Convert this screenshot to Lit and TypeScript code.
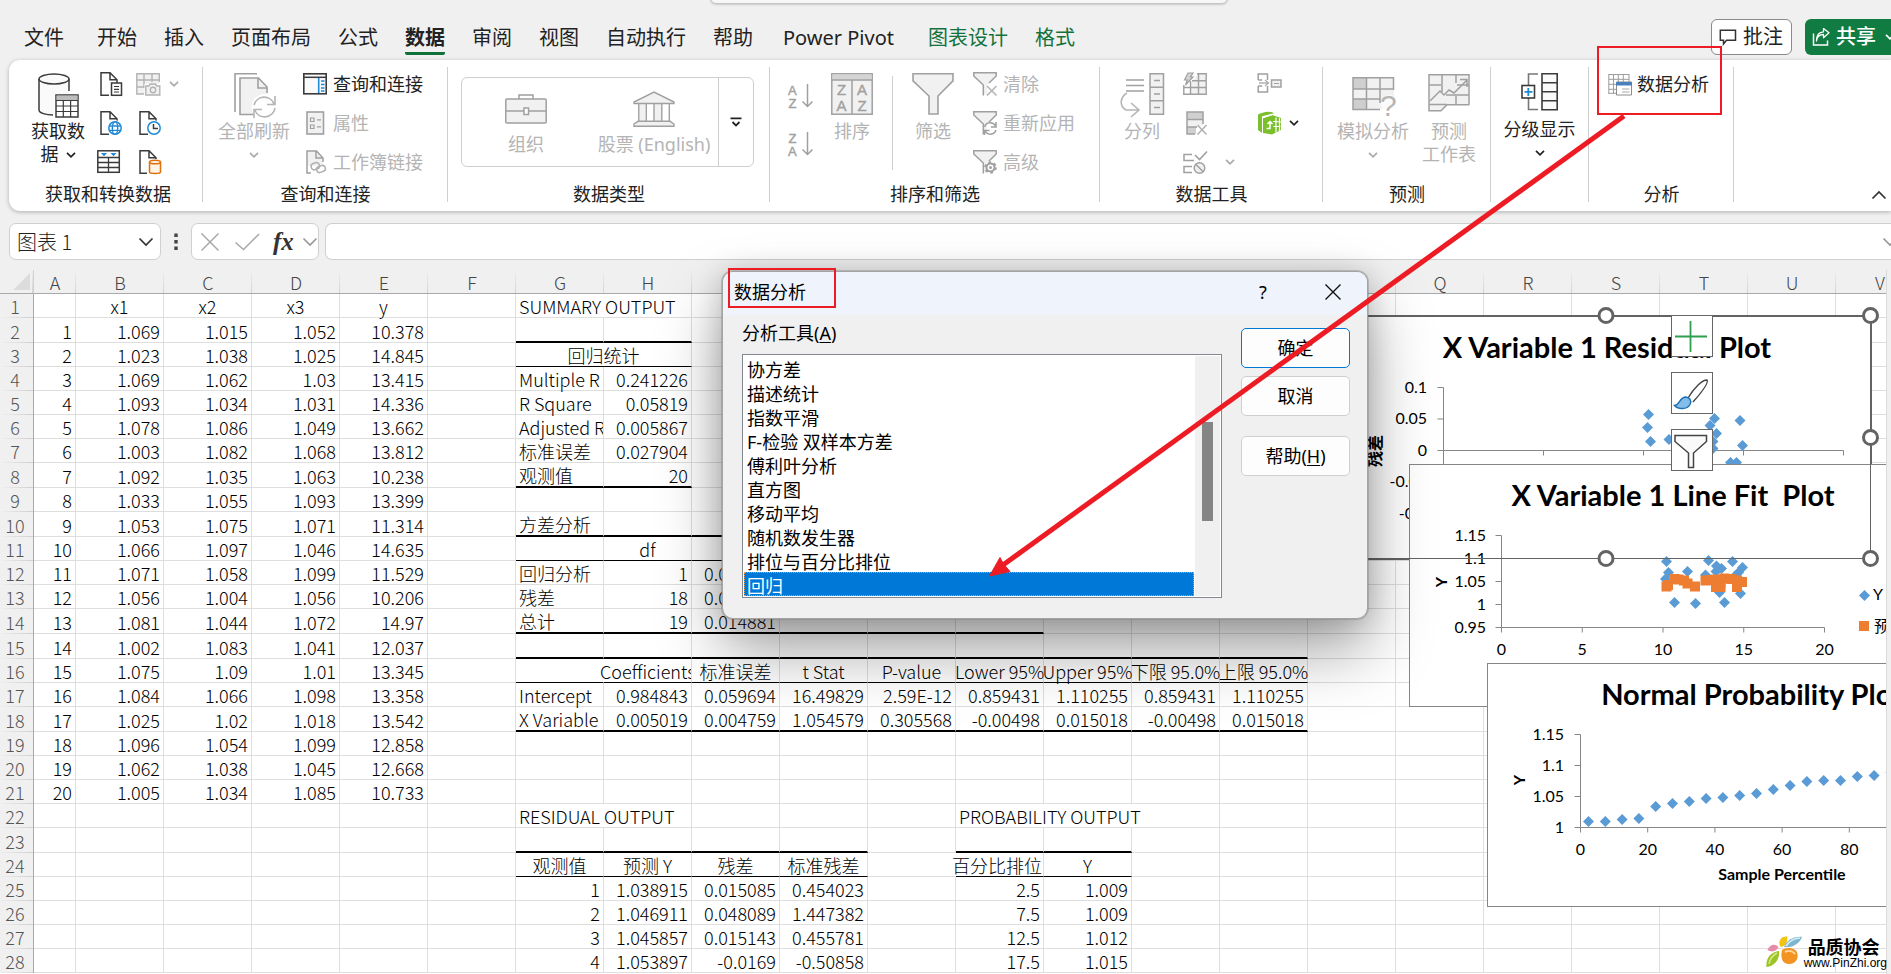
import { LitElement, html, css, svg, nothing } from "lit";
import { customElement, property } from "lit/decorators.js";
import { classMap } from "lit/directives/class-map.js";

/* ---------- icons ---------- */

const INK = "#3b3b3b";
const DIM = "#a0a0a0";
const PALE = "#f1f1f1";
const BLUE = "#1e8ad6";

const icon = (w: number, h: number, body: unknown) => html`<svg
  width=${w} height=${h} viewBox="0 0 ${w} ${h}" fill="none" aria-hidden="true">${body}</svg>`;

const page = (c: string, fill = "#fff") => svg`
  <path d="M4.5 .8h9.5l7 7v15.5h-16.500z" fill=${fill}/>
  <path d="M13 23.2H5V.8h9l7 7V11M14 .8v7h7" stroke=${c} stroke-width="1.5"/>`;

const funnel = (rest: unknown) => icon(24, 24, svg`
  <path d="M.8 .8h22.400v3.200L14 13v9.500h-4V13L.8 4z" fill=${PALE}/>
  <path d="M10.300 23.500V13L.8 4V.8h22.400v3.200L16 11" stroke=${DIM} stroke-width="1.5"/>${rest}`);

const chev = (c: string, big = false) => big
  ? icon(16, 10, svg`<path d="M1.500 1.500L8 8l6.500-6.500" stroke=${c} stroke-width="1.700"/>`)
  : icon(10, 8, svg`<path d="M1 1.800l4 4 4-4" stroke=${c} stroke-width="1.700"/>`);

const icons = {
  database: icon(48, 48, svg`
    <path d="M5 7v31c0 3 7 5 15 5V24h15V7c0-7-30-7-30 0z" fill="#fafafa"/>
    <ellipse cx="20" cy="7" rx="15" ry="5" stroke=${INK} stroke-width="1.500"/>
    <path d="M5 7v31c0 3 7 5 14 5M35 7v12" stroke=${INK} stroke-width="1.500"/>
    <rect x="22" y="23" width="22" height="22" fill="#fff" stroke=${INK} stroke-width="1.500"/>
    <path d="M22.500 23.500h21v4.500h-21z" fill="#bdbdbd"/>
    <path d="M22 28.500h22M22 34h22M22 39.500h22M29.300 28v17M36.600 28v17" stroke=${INK} stroke-width="1.200"/>`),
  docText: icon(27, 24, svg`${page(INK)}<rect x="15.500" y="11" width="10" height="12.300" fill="#fff" stroke=${INK} stroke-width="1.500"/>
    <path d="M18 14.500h5M18 17.300h5M18 20h5" stroke=${INK} stroke-width="1.200"/>`),
  docWeb: icon(27, 24, svg`${page(INK)}<circle cx="19" cy="17" r="7.800" fill="#fff"/><circle cx="19" cy="17" r="6.200" stroke=${BLUE} stroke-width="1.500"/>
    <ellipse cx="19" cy="17" rx="2.700" ry="6.200" stroke=${BLUE} stroke-width="1.300"/><path d="M13 15h12M13 19.300h12" stroke=${BLUE} stroke-width="1.300"/>`),
  docTime: icon(27, 24, svg`${page(INK)}<circle cx="19" cy="17" r="7.800" fill="#fff"/><circle cx="19" cy="17" r="6.200" stroke=${BLUE} stroke-width="1.500"/>
    <path d="M18.500 13v4.500H23" stroke=${INK} stroke-width="1.500"/>`),
  docDb: icon(27, 24, svg`${page(INK)}<path d="M12 9h14v15H12z" fill="#fff"/>
    <path d="M14.500 12v10c0 2 11 2 11 0V12c0-2.500-11-2.500-11 0z" fill="#fff3e6" stroke="#e0700c" stroke-width="1.500"/><path d="M14.500 12c0 2.400 11 2.400 11 0" stroke="#e0700c" stroke-width="1.500"/>`),
  tableFilter: icon(27, 24, svg`<rect x="1.800" y=".8" width="21.500" height="21.500" fill="#fff" stroke=${INK} stroke-width="1.500"/>
    <path d="M2 7.500h21M2 12.500h21M2 17.500h21M12.500 7.500V22" stroke=${INK} stroke-width="1.300"/><path d="M5 3h6l-3 3.300zM14.500 3h6l-3 3.300z" fill=${BLUE}/>`),
  tableCam: icon(27, 24, svg`<rect x="1.800" y="1.800" width="22.500" height="20" fill=${PALE}/>
    <path d="M9 22H1.800V1.800h22.500V10M2 8h22M2 15h8M9 2v14M17 2v8" stroke="#b3b3b3" stroke-width="1.400"/>
    <path d="M9.500 12h15.500v12H9.500z" fill="#fff"/><path d="M10.800 14h3l1.500-2h5l1.500 2h3v9h-14z" fill=${PALE} stroke="#b3b3b3" stroke-width="1.400"/><circle cx="18" cy="18" r="2.700" stroke="#b3b3b3" stroke-width="1.400"/>`),
  refresh: icon(48, 48, svg`<path d="M5 40V1.800h22" stroke=${DIM} stroke-width="1.600"/>
    <path d="M10 6h19l9 9v28H10z" fill=${PALE}/><path d="M24 42.500H10V6h18.500L37 15v6M28 6v10h9" stroke=${DIM} stroke-width="1.600"/>
    <circle cx="34.500" cy="35" r="13" fill="#fff"/>
    <path d="M24 33a10.500 10.500 0 0 1 20-1M45 24v8.500h-8M45 36a10.500 10.500 0 0 1-20 2.500M24 46v-8.500h8" stroke="#b5b5b5" stroke-width="1.600"/>`),
  queries: icon(24, 24, svg`<rect x=".8" y="1.800" width="22.400" height="20" fill="#fafafa" stroke=${INK} stroke-width="1.600"/><path d="M1 5.300h22" stroke=${INK} stroke-width="1.500"/>
    <path d="M15.700 6v15" stroke=${BLUE} stroke-width="1.600"/><path d="M18 9h3.500M18 12.500h3.500M18 16h3.500M18 19h3.500" stroke=${BLUE} stroke-width="1.300"/>`),
  props: icon(24, 24, svg`<rect x="4" y="1" width="16.500" height="22" fill=${PALE} stroke=${DIM} stroke-width="1.600"/><path d="M7.500 7h3.500v3.500H7.500zM7.500 14h3.500v3.500H7.500zM14 8.800h4M14 15.800h4" stroke=${DIM} stroke-width="1.200"/>`),
  links: icon(24, 24, svg`<path d="M4 1h9l7 7v8H4z" fill=${PALE}/><path d="M8 23H4V1h9.500L20 8v4M13 1v7h7" stroke=${DIM} stroke-width="1.500"/>
    <rect x="8" y="13" width="8.500" height="6.500" rx="3.200" transform="rotate(-20 12 16)" stroke="#b0b0b0" stroke-width="1.500"/><rect x="13.500" y="16" width="9" height="6" rx="3" transform="rotate(-20 18 19)" stroke="#b0b0b0" stroke-width="1.500"/>`),
  briefcase: icon(42, 36, svg`<rect x=".8" y="8" width="40.400" height="24" rx="1" fill=${PALE} stroke=${DIM} stroke-width="1.500"/><path d="M14 8V4h14v4M1 20h40" stroke=${DIM} stroke-width="1.500"/><rect x="19" y="17" width="4.500" height="6.500" fill="#fff" stroke=${DIM} stroke-width="1.500"/>`),
  bank: icon(42, 36, svg`<path d="M6.500 13h6v17h-6zM21.500 13h7v17h-7z" fill=${PALE}/><path d="M1 12.500V11L21 1l20 10v1.500zM1 35.300V33l4-2.700h32L41 33v2.300z" fill=${PALE} stroke=${DIM} stroke-width="1.400"/><path d="M5.800 13v17.500M13.300 13v17.500M21 13v17.500M28.800 13v17.500M36.300 13v17.500" stroke=${DIM} stroke-width="1.400"/>`),
  more: icon(12, 10, svg`<path d="M.5 1.300h11M2.500 5l3.500 3.500L9.500 5" stroke="#222" stroke-width="1.800"/>`),
  sortAz: icon(26, 26, svg`<text x="0" y="12" class="az">A</text><text x=".5" y="25" class="az">Z</text><path d="M19.500 1v22.500M14.500 18.500l5 5 5-5" stroke=${DIM} stroke-width="1.500"/>`),
  sortZa: icon(26, 26, svg`<text x=".5" y="12" class="az">Z</text><text x="0" y="25" class="az">A</text><path d="M19.500 1v22.500M14.500 18.500l5 5 5-5" stroke=${DIM} stroke-width="1.500"/>`),
  sort: icon(42, 48, svg`<rect x=".8" y="1.800" width="40.400" height="40.400" fill=${PALE} stroke=${DIM} stroke-width="1.500"/><path d="M1.500 2.500h39v5h-39z" fill="#d4d4d4"/><path d="M1 8h40M21 8v34" stroke=${DIM} stroke-width="1.500"/>
    <text x="6" y="23" class="az wide">Z</text><text x="5.500" y="39" class="az wide">A</text><text x="26" y="23" class="az wide">A</text><text x="26.500" y="39" class="az wide">Z</text>`),
  filter: icon(42, 48, svg`<path d="M1 1.800h40v7L26 24v18h-9V24L1 8.800z" fill=${PALE} stroke=${DIM} stroke-width="1.600"/>`),
  clear: funnel(svg`<path d="M14 14l9.500 9.500M23.500 14L14 23.500" stroke="#b5b5b5" stroke-width="1.600"/>`),
  reapply: funnel(svg`<path d="M11.500 16a6 6 0 0 1 11-1M23 11v5h-5M23 19a6 6 0 0 1-11 1M11.500 24v-4.500h5" stroke=${DIM} stroke-width="1.500"/>`),
  advanced: funnel(svg`<circle cx="17.500" cy="17.500" r="4" fill="#fff" stroke=${DIM} stroke-width="2"/><circle cx="17.500" cy="17.500" r="5.300" stroke=${DIM} stroke-width="2" stroke-dasharray="2.700 2.850"/><circle cx="17.500" cy="17.500" r="1.500" fill=${DIM}/>`),
  split: icon(48, 48, svg`<path d="M8 8h18M8 13.500h18M8 19h18" stroke=${DIM} stroke-width="1.500"/><path d="M9 21c-7 4-8 13-1 17h12M13 31l8 7-8 7" stroke="#b5b5b5" stroke-width="1.600"/>
    <path d="M32 1.800h13.500v40.400H32zM32 15.300h13.500M32 28.800h13.500" fill=${PALE} stroke=${DIM} stroke-width="1.500"/><path d="M36 8.500h6M36 22h6M36 35.500h6" stroke=${DIM} stroke-width="1.400"/>`),
  flash: icon(24, 24, svg`<path d="M7 12V22h16V2h-8" fill=${PALE}/><path d="M.8 13v9.200h22.400V1.800H14M1 15.500h22M9 8.800h14M7.500 9v13M15.500 2v20" stroke=${DIM} stroke-width="1.400"/><path d="M5 1h5L7.500 5H10l-7.500 8L4.300 8H1.500z" fill="#d4d4d4" stroke=${DIM} stroke-width="1.200"/>`),
  dedupe: icon(24, 24, svg`<path d="M4 1h16v8H4z" fill="#d0d0d0"/><path d="M4 9h16v5l-8 4H4z" fill=${PALE}/><path d="M4 16h9v7H4z" fill="#d0d0d0"/><path d="M12 23H4V1h16v12M4 8.500h16M4 16h10" stroke=${DIM} stroke-width="1.500"/><path d="M14.500 14l9 9.500M23.500 14l-9 9.500" stroke="#b0b0b0" stroke-width="1.500"/>`),
  validate: icon(24, 24, svg`<path d="M9 4.500H1v6h10M9 16.500H1v6h8" stroke=${DIM} stroke-width="1.500"/><path d="M12 5l4.500 4.500L24 1.500" stroke=${DIM} stroke-width="1.600"/><circle cx="16.500" cy="18" r="5.300" fill=${PALE} stroke=${DIM} stroke-width="1.500"/><path d="M13 14.500l7 7" stroke=${DIM} stroke-width="1.500"/>`),
  merge: icon(26, 24, svg`<path d="M10.500 8V2H1.200v6M10.500 14v6H1.200v-6M1.200 8h4M1.200 14h4" stroke=${DIM} stroke-width="1.500"/><path d="M2 11h9M8 8l3.500 3L8 14" stroke="#b0b0b0" stroke-width="1.400"/><path d="M14.500 8h9.500v7h-9.500z" fill=${PALE} stroke=${DIM} stroke-width="1.500"/><path d="M17 11.500h5" stroke=${DIM}/>`),
  model: icon(26, 24, svg`<path d="M1 3.500C5 1.500 12-1 17 2.300L5 5.300V22L1 19z" fill="#7bbf2d"/><path d="M6 7l9-3 9 3v12l-9 4.500L6 22z" fill="#7bbf2d"/><path d="M9.500 17.500h3.500V11M10.500 13l2.500-2.500 2.500 2.500" stroke="#fff" stroke-width="1.500"/><path d="M19 6.500v15M22.500 7v13M16 10.500l8 .5M16.500 15.500h7" stroke="#fff" stroke-width="1.200"/><path d="M5.500 22V7L15 3.800" stroke="#fff" stroke-width="1"/>`),
  whatIf: icon(48, 48, svg`<path d="M4 6h41v31H4z" fill=${PALE}/><path d="M4 6h13v11H4zM4 27h13v10H4z" fill="#cfcfcf"/><path d="M31 37.500H4V5.800h40.500V18M4 17h40M4 27h27M17.500 6v31M31 6v25" stroke=${DIM} stroke-width="1.500"/><circle cx="41" cy="32" r="9" fill="#fff" fill-opacity=".7"/><text x="31" y="44" class="q">?</text>`),
  forecast: icon(42, 48, svg`<path d="M1 2.800h40v30H20l-5 5H1z" fill=${PALE}/><path d="M41 32.500V2.800H1v36h12l6-6h22.500M1 13h12M29 13h12M18 23h23M14 3v17M28 3v8M28 24v9M1 32.500h18" stroke=${DIM} stroke-width="1.500"/><path d="M2 29l10-10 4 4 5-5 5 3L39 8M32 7.500h7V15" stroke=${DIM} stroke-width="1.500"/>`),
  outline: icon(38, 46, svg`<path d="M17 2H7.500v11M7.500 26v11.500H17" stroke="#777" stroke-width="1.600"/><path d="M21 1.800h15.200v36H21zM21 10.800h15M21 19.800h15M21 28.800h15" fill="#fafafa" stroke=${INK} stroke-width="1.600"/><rect x="1" y="13.500" width="12.500" height="12.500" fill="#fff" stroke=${INK} stroke-width="1.600"/><path d="M3.500 19.800h8M7.300 16v8" stroke=${BLUE} stroke-width="1.800"/>`),
  analysis: icon(24, 24, svg`<path d="M.8 2.500h20.500M.8 7.300h20.500M.8 12.300h20.500M.8 17.300h8M.8 21.300h8M.8 2v20M5.500 2v20M10.300 2v8M15.300 2v8M21 2v8" stroke="#9d9d9d"/><path d="M8.500 10h15v13h-15z" fill="#fff" stroke="#8c8c8c"/><path d="M8 10h16v3.500H8z" fill="#4a80bd"/><path d="M14 17h7.500M14 20h7.500" stroke="#aaa"/>`),
  comment: icon(18, 18, svg`<path d="M1.300 2.300h15.200v10H7.500L4.500 16v-3.700H1.300z" stroke="#333" stroke-width="1.500"/>`),
  share: icon(18, 18, svg`<path d="M1.500 5.500V17h14v-4.500" stroke="#fff" stroke-width="1.500"/><path d="M4.500 13c.5-4.500 3-6.500 7-6.500V9.800l5.500-5-5.500-4.300v3.300C6.500 4 4.500 8 4.500 13z" stroke="#fff" stroke-width="1.300" stroke-linejoin="round"/>`),
  cross: icon(20, 20, svg`<path d="M1.500 1.500l17 17M18.500 1.500l-17 17" stroke="#a8a8a8" stroke-width="1.500"/>`),
  check: icon(26, 20, svg`<path d="M1.500 10.500l8 7L25 2" stroke="#a8a8a8" stroke-width="1.500"/>`),
  close: icon(18, 18, svg`<path d="M1.500 1.500l15 15M16.500 1.500l-15 15" stroke="#111" stroke-width="1.400"/>`),
  dots: icon(4, 18, svg`<path d="M.3 .5h3.400v3.400H.3zM.3 7h3.400v3.400H.3zM.3 13.500h3.400v3.400H.3z" fill="#444"/>`),
  up: icon(16, 10, svg`<path d="M1.500 8.500L8 2l6.500 6.500" stroke="#333" stroke-width="1.700"/>`),
  plus: icon(39, 39, svg`<path d="M3 19.500h32M18.500 4v31" stroke="#2e9e4f" stroke-width="1.800"/>`),
  brush: icon(39, 39, svg`<path d="M16 24C22 14 30 6 35 6c2 3-6 13-14 22" fill="#fff" stroke="#444" stroke-width="1.400"/><path d="M2.500 31.500c5 0 4.500-7.500 11-8.500 4 0 6.500 3.500 4.500 7.500-3 5.500-12 5-15.500 1z" fill="#84bdea" stroke="#1b6fb5" stroke-width="1.400"/>`),
  chartFilter: icon(39, 39, svg`<path d="M3 4.500h31.500v6L21.500 22v14.500h-5V22L3 10.500z" fill="#fafafa" stroke="#444" stroke-width="1.500"/>`),
  flower: icon(38, 32, svg`
    <path d="M14 10c-2-5 1-10 7-9.500C22 5 20 10 15 11z" fill="#f2c311"/>
    <path d="M18 11C21 3 29 0 36 .8 34 8 26 12 18 11z" fill="#7fb6cf"/><path d="M20 10C23 5 29 2 34 2" stroke="#d9eef7" stroke-width="1.500"/>
    <path d="M1.500 14c2-5 7-7 11-3-2 4-6 6-11 3z" fill="#e58bab"/>
    <path d="M.5 31C-.5 22 5 16 13 15c1 8-4 15-12.500 16z" fill="#9cc427"/><path d="M3 28c1-5 4-9 8-11" stroke="#d6ec8f" stroke-width="1.400"/>
    <path d="M16 14c4-3 12-3 15 2 2 6-1 12-8 12-6 0-9-5-7-14z" fill="#f39322"/><path d="M19 16c4-2 8-1 10 2" stroke="#ffd9a0" stroke-width="2"/>`),
};

const svgBase = css`svg { display: block; flex: none; }`;

/* ---------- worksheet data ---------- */

type Align = "l" | "c" | "r";
interface Cell { text: string; align: Align; span?: number; spill?: boolean; clip?: boolean }

const LETTERS = "ABCDEFGHIJKLMNOPQRSTUV".split("");
const TALL = new Set([2, 8, 10, 14, 15, 18, 23]);
const cells = new Map<string, Cell>();
const put = (ref: string, text: string, align: Align = "r", extra: Partial<Cell> = {}) => cells.set(ref, { text, align, ...extra });
const putRow = (row: number, from: string, texts: string[], align: Align = "r") =>
  texts.forEach((t, i) => t && put(LETTERS[LETTERS.indexOf(from) + i] + row, t, align));

putRow(1, "B", ["x1", "x2", "x3", "y"], "c");
[
  "1.069 1.015 1.052 10.378", "1.023 1.038 1.025 14.845", "1.069 1.062 1.03 13.415", "1.093 1.034 1.031 14.336",
  "1.078 1.086 1.049 13.662", "1.003 1.082 1.068 13.812", "1.092 1.035 1.063 10.238", "1.033 1.055 1.093 13.399",
  "1.053 1.075 1.071 11.314", "1.066 1.097 1.046 14.635", "1.071 1.058 1.099 11.529", "1.056 1.004 1.056 10.206",
  "1.081 1.044 1.072 14.97", "1.002 1.083 1.041 12.037", "1.075 1.09 1.01 13.345", "1.084 1.066 1.098 13.358",
  "1.025 1.02 1.018 13.542", "1.096 1.054 1.099 12.858", "1.062 1.038 1.045 12.668", "1.005 1.034 1.085 10.733",
].forEach((line, i) => putRow(i + 2, "A", [String(i + 1), ...line.split(" ")]));

put("G1", "SUMMARY OUTPUT", "l", { span: 2 });
put("G3", "回归统计", "c", { span: 2 });
put("G4", "Multiple R", "l");
put("G5", "R Square", "l");
put("G6", "Adjusted R Square", "l", { clip: true });
put("G7", "标准误差", "l");
put("G8", "观测值", "l");
["0.241226", "0.05819", "0.005867", "0.027904", "20"].forEach((t, i) => put("H" + (i + 4), t));
put("G10", "方差分析", "l");
putRow(11, "H", ["df", "SS"], "c");
["回归分析", "残差", "总计"].forEach((t, i) => put("G" + (i + 12), t, "l"));
putRow(12, "H", ["1", "0.000866"]);
putRow(13, "H", ["18", "0.014015"]);
putRow(14, "H", ["19", "0.014881"]);
put("H16", "Coefficients", "l", { spill: true, clip: true });
putRow(16, "I", ["标准误差", "t Stat", "P-value", "Lower 95%", "Upper 95%", "下限 95.0%", "上限 95.0%"], "c");
put("G17", "Intercept", "l");
put("G18", "X Variable 1", "l", { clip: true });
putRow(17, "H", ["0.984843", "0.059694", "16.49829", "2.59E-12", "0.859431", "1.110255", "0.859431", "1.110255"]);
putRow(18, "H", ["0.005019", "0.004759", "1.054579", "0.305568", "-0.00498", "0.015018", "-0.00498", "0.015018"]);
put("G22", "RESIDUAL OUTPUT", "l", { span: 2 });
put("L22", "PROBABILITY OUTPUT", "l", { span: 3 });
putRow(24, "G", ["观测值", "预测 Y", "残差", "标准残差"], "c");
put("L24", "百分比排位", "l", { spill: true, clip: true });
put("M24", "Y", "c");
[["1", "1.038915", "0.015085", "0.454023"], ["2", "1.046911", "0.048089", "1.447382"], ["3", "1.045857", "0.015143", "0.455781"], ["4", "1.053897", "-0.0169", "-0.50858"]]
  .forEach((r, i) => putRow(25 + i, "G", r));
[["2.5", "1.009"], ["7.5", "1.009"], ["12.5", "1.012"], ["17.5", "1.015"]].forEach((r, i) => putRow(25 + i, "L", r));

const rules: Record<number, [string, string, string][]> = {
  2: [["G", "H", "thick"]], 3: [["G", "H", "thin"]], 8: [["G", "H", "thick"]],
  10: [["G", "L", "thick"]], 11: [["G", "L", "thin"]], 14: [["G", "L", "thick"]],
  15: [["G", "O", "thick"]], 16: [["G", "O", "thin"]], 18: [["G", "O", "thick"]],
  23: [["G", "J", "thick"], ["L", "M", "thick"]], 24: [["G", "J", "thin"], ["L", "M", "thin"]],
};
const ruleFor = (row: number, col: string) => rules[row]?.find(([a, b]) => col >= a && col <= b)?.[2] ?? "";

@customElement("work-sheet")
export class WorkSheet extends LitElement {
  static styles = [svgBase, css`
    :host { display: block; overflow: hidden; background: #fff; border-right: 1px solid #dadada; }
    table { border-collapse: separate; border-spacing: 0; table-layout: fixed; }
    th, td { padding: 0; box-sizing: border-box; font: 300 18px/22px "Noto Sans CJK SC", sans-serif; color: #000; }
    thead th { height: 24px; background: linear-gradient(#efefef, #d2d2d2) right / 1px 100% no-repeat #f0f0f0; border-bottom: 1px solid #a9a9a9; color: #444; }
    tbody th { background: linear-gradient(90deg, #efefef, #cfcfcf) bottom / 100% 1px no-repeat #f0f0f0; border-right: 1px solid #a9a9a9; color: #555; padding-right: 3px; }
    .corner { border-right: 1px solid #d2d2d2; }
    .corner svg { margin: 0 3px 0 auto; }
    td { border-right: 1px solid #dedede; border-bottom: 1px solid #dedede; vertical-align: bottom; }
    td.open { border-right-color: transparent; }
    td.thin { border-bottom: 1px solid #000; }
    td.thick { border-bottom: 2px solid #000; }
    .tx { height: 22px; white-space: nowrap; display: flex; }
    .clip { overflow-x: clip; }
    .l { justify-content: flex-start; padding-left: 3px; }
    .c { justify-content: center; }
    .r { justify-content: flex-end; padding-right: 3px; }
    .spill { margin-left: -4px; padding-left: 0; }
  `];
  render() {
    const widths = [34, 42, ...Array(21).fill(88)];
    return html`<table style="width:${widths.reduce((a, b) => a + b)}px">
      <colgroup>${widths.map((w) => html`<col style="width:${w}px">`)}</colgroup>
      <thead><tr><th class="corner">${icon(17, 17, svg`<path d="M17 0v17H0z" fill="#dcdcdc"/>`)}</th>${LETTERS.map((l) => html`<th scope="col">${l}</th>`)}</tr></thead>
      <tbody>${Array.from({ length: 28 }, (_, i) => this.row(i + 1))}</tbody>
    </table>`;
  }
  private row(n: number) {
    const out: unknown[] = [];
    for (let i = 0; i < LETTERS.length; i++) {
      const col = LETTERS[i];
      const c = cells.get(col + n);
      const rule = ruleFor(n, col);
      const open = !!cells.get(LETTERS[i + 1] + n)?.spill;
      out.push(html`<td class=${classMap({ thin: rule === "thin", thick: rule === "thick", open })} colspan=${c?.span ?? 1}>${
        c ? html`<div class="tx ${c.align} ${c.spill ? "spill" : ""} ${c.clip ? "clip" : ""}">${c.text}</div>` : nothing}</td>`);
      if (c?.span) i += c.span - 1;
    }
    return html`<tr style="height:${TALL.has(n) ? 25 : 24}px"><th scope="row">${n}</th>${out}</tr>`;
  }
}

/* ---------- charts ---------- */

interface Tick { at: number; label: string }
interface ChartSpec {
  box: [number, number, number, number];
  title: string; titleX: number; titleY: number;
  axisX: number; top: number; bottom: number; zero: number; end: number;
  yTicks: Tick[]; xTicks: Tick[]; xLabels: boolean; labelRight: number;
  yTitle: string; yTitleAt: [number, number];
  xTitle?: [string, number, number];
  diamonds: [number, number][]; squares?: [number, number][];
  legend?: boolean;
}

const ticks = (from: number, step: number, labels: string[]): Tick[] => labels.map((label, i) => ({ at: from + i * step, label }));

const residual: ChartSpec = {
  box: [1342, 316, 529, 243], title: "X Variable 1 Residual Plot", titleX: 1607, titleY: 358,
  axisX: 1443.5, top: 387.5, bottom: 540, zero: 450.5, end: 1843.5,
  yTicks: ticks(387.5, 31.5, ["0.1", "0.05", "0", "-0.05", "-0.1"]), xTicks: ticks(1443.5, 100, ["0", "5", "10", "15", "20"]), xLabels: false, labelRight: 1427,
  yTitle: "残差", yTitleAt: [1375, 451],
  diamonds: [[1648.5, 414.5], [1647.5, 427.5], [1650.5, 441.5], [1669, 439.5], [1714.5, 418.5], [1710, 425.5], [1716.5, 433.5], [1713, 441.5], [1713, 448.5], [1740, 420.5], [1742.5, 445.5], [1730.5, 462.5], [1736.5, 462.5]],
};
const lineFit: ChartSpec = {
  box: [1409, 464, 520, 243], title: "X Variable 1 Line Fit  Plot", titleX: 1673, titleY: 506,
  axisX: 1501.5, top: 535.5, bottom: 627.5, zero: 627.5, end: 1824.5,
  yTicks: ticks(535.5, 23, ["1.15", "1.1", "1.05", "1", "0.95"]), xTicks: ticks(1501.5, 80.75, ["0", "5", "10", "15", "20"]), xLabels: true, labelRight: 1486,
  yTitle: "Y", yTitleAt: [1441, 582],
  diamonds: [[1666.5, 561.5], [1668.5, 572.5], [1665.5, 579], [1687.5, 571.5], [1708.5, 560.5], [1716.5, 566], [1721.5, 568.5], [1716, 571.5], [1705.5, 575], [1732.5, 561.5], [1742.5, 567.5], [1738.5, 572.5], [1735, 576], [1740.5, 593.5], [1719.5, 592.5], [1674.5, 602.5], [1695.5, 603.5], [1724.5, 602.5]],
  squares: [[1666.5, 586.5], [1668, 585], [1674.5, 579], [1678.5, 579.5], [1684, 580.5], [1687.5, 583.5], [1695, 586.5], [1705.5, 580.5], [1709.5, 580], [1716, 579.5], [1716, 587], [1720.5, 587], [1720.5, 583], [1724.5, 578.5], [1731.5, 579], [1737, 580.5], [1737, 587], [1742, 582]],
  legend: true,
};
const normal: ChartSpec = {
  box: [1487, 663, 520, 244], title: "Normal Probability Plot", titleX: 1752, titleY: 705,
  axisX: 1580.5, top: 734.5, bottom: 827.5, zero: 827.5, end: 1920,
  yTicks: ticks(734.5, 31, ["1.15", "1.1", "1.05", "1"]), xTicks: ticks(1580.5, 67.200, ["0", "20", "40", "60", "80", "100"]), xLabels: true, labelRight: 1564,
  yTitle: "Y", yTitleAt: [1519, 780],
  xTitle: ["Sample Percentile", 1782, 880],
  diamonds: [821, 821, 819, 818, 806, 803, 801, 798, 797, 795, 793, 789, 785, 781, 780, 780, 776, 775, 772, 770].map((y, k) => [1588.5 + k * 16.800, y + 0.5]),
};

@customElement("sheet-chart")
export class SheetChart extends LitElement {
  static styles = css`
    :host { display: block; }
    svg { display: block; font-family: "Lato", "Noto Sans CJK SC", sans-serif; }
    .frame { fill: #fff; stroke: #868686; }
    .axis { stroke: #868686; fill: none; }
    .title { font-size: 29px; font-weight: 700; text-anchor: middle; white-space: pre; }
    .num { font-size: 16px; text-anchor: end; }
    .mid { text-anchor: middle; }
    .strong { font-size: 16px; font-weight: 700; text-anchor: middle; }
    .leg { font-size: 16px; }
    .dot { fill: #5b9bd5; }
    .sq { fill: #ed7d31; }
  `;
  @property({ attribute: false }) spec!: ChartSpec;
  render() {
    const s = this.spec;
    const [x, y, w, h] = s.box;
    const dot = ([a, b]: [number, number]) => svg`<path class="dot" d="M${a} ${b - 5.5}l5.500 5.500-5.500 5.500-5.500-5.500z"/>`;
    const sq = ([a, b]: [number, number]) => svg`<rect class="sq" x=${a - 5} y=${b - 5} width="10" height="10"/>`;
    return html`<svg width=${w} height=${h} viewBox="${x} ${y} ${w} ${h}" role="img" aria-label=${s.title}>
      <rect class="frame" x=${x + 0.5} y=${y + 0.5} width=${w - 1} height=${h - 1}/>
      <text class="title" x=${s.titleX} y=${s.titleY}>${s.title}</text>
      <path class="axis" d="M${s.axisX} ${s.top}V${s.bottom}M${s.axisX} ${s.zero}H${s.end}"/>
      ${s.yTicks.map((t) => svg`<path class="axis" d="M${s.axisX - 6} ${t.at}h6"/><text class="num" x=${s.labelRight} y=${t.at + 5}>${t.label}</text>`)}
      ${s.xTicks.map((t) => svg`<path class="axis" d="M${t.at} ${s.zero}v5"/>${s.xLabels ? svg`<text class="num mid" x=${t.at} y=${s.zero + 27}>${t.label}</text>` : nothing}`)}
      <text class="strong" transform="translate(${s.yTitleAt[0] + 6} ${s.yTitleAt[1]}) rotate(-90)">${s.yTitle}</text>
      ${s.xTitle ? svg`<text class="strong" x=${s.xTitle[1]} y=${s.xTitle[2]}>${s.xTitle[0]}</text>` : nothing}
      ${s.diamonds.map(dot)}${(s.squares ?? []).map(sq)}
      ${s.legend ? svg`${dot([1864.5, 595.5])}${sq([1864, 626])}<text class="leg" x="1873" y="600">Y</text><text class="leg" x="1874" y="632">预测 Y</text>` : nothing}
    </svg>`;
  }
}

/* ---------- dialog ---------- */

@customElement("analysis-dialog")
export class AnalysisDialog extends LitElement {
  static styles = [svgBase, css`
    :host { display: flex; flex-direction: column; box-sizing: border-box; width: 646px; height: 348px; border: 1px solid #a4a4a4; border-radius: 11px; overflow: hidden; background: #f0f0f0;
      box-shadow: 0 0 0 1px rgba(120,120,120,.35), 0 32px 64px rgba(0,0,0,.36), 0 2px 28px rgba(0,0,0,.18); font: 18px/24px "Noto Sans", "Noto Sans CJK SC", sans-serif; color: #000; }
    header { display: flex; align-items: center; box-sizing: border-box; height: 43px; padding: 0 25px 3px 11px; background: #eff3fb; }
    h2 { margin: 0; font: inherit; flex: 1; }
    header button { border: 0; background: none; padding: 0; font: inherit; color: inherit; display: grid; place-items: center; }
    .help { margin-right: 52px; width: 18px; }
    .body { display: flex; gap: 19px; padding: 7px 17px 0 19px; }
    .left { flex: 1; }
    label { display: block; height: 32px; line-height: 22px; }
    u { text-underline-offset: 2px; }
    .list { display: flex; box-sizing: border-box; height: 244px; border: 1px solid #828790; background: #fff; padding: 1px; }
    select { flex: 1; border: 0; padding: 0; margin: 0; outline: 0; background: #fff; font: inherit; overflow: hidden; height: 240px; scrollbar-width: none; border-radius: 0; color: #000; }
    option { padding: 0 3px 2px; height: 24px; min-height: 0; font: inherit; line-height: 22px; box-sizing: border-box; }
    option:checked { background: #0078d7 linear-gradient(#0078d7, #0078d7); -webkit-text-fill-color: #fff; outline: 1px dotted #f0953a; outline-offset: -1px; }
    .bar { width: 25px; background: #f0f0f0; padding-top: 66px; margin-left: 1px; box-sizing: border-box; }
    .thumb { width: 11px; height: 99px; margin: 0 auto; background: #858585; }
    .actions { display: flex; flex-direction: column; gap: 8px; width: 109px; padding-top: 6px; }
    .actions button { height: 40px; border: 1px solid #cfcfcf; border-radius: 5px; background: #fdfdfd; font: inherit; color: inherit; padding: 0; }
    .actions .ok { border-color: #0078d4; }
    .actions .gap { margin-top: 12px; }
  `];
  render() {
    const tools = ["协方差", "描述统计", "指数平滑", "F-检验 双样本方差", "傅利叶分析", "直方图", "移动平均", "随机数发生器", "排位与百分比排位", "回归"];
    return html`
      <header><h2>数据分析</h2><button class="help">?</button><button aria-label="关闭">${icons.close}</button></header>
      <div class="body">
        <div class="left">
          <label for="tools">分析工具(<u>A</u>)</label>
          <div class="list"><select id="tools" size="10">${tools.map((t) => html`<option ?selected=${t === "回归"}>${t}</option>`)}</select>
            <div class="bar"><div class="thumb"></div></div></div>
        </div>
        <div class="actions"><button class="ok">确定</button><button>取消</button><button class="gap">帮助(<u>H</u>)</button></div>
      </div>`;
  }
}

/* ---------- ribbon ---------- */

@customElement("data-ribbon")
export class DataRibbon extends LitElement {
  static styles = [svgBase, css`
    :host { display: flex; position: relative; height: 151px; margin-left: 9px; background: #fff; border-radius: 11px 0 0 11px; box-shadow: 0 1px 4px rgba(0,0,0,.28); font: 18px/23px "Noto Sans", "Noto Sans CJK SC", sans-serif; color: #222; }
    svg { overflow: visible; }
    section { flex: none; display: flex; flex-direction: column; position: relative; box-sizing: border-box; padding-top: 12px; }
    section::after { content: ""; position: absolute; right: 0; top: 7px; bottom: 9px; width: 1px; background: #cfcfcf; }
    h3 { margin: 0; font: inherit; line-height: 24px; text-align: center; height: 29px; }
    .items { flex: 1; display: flex; align-items: flex-start; min-height: 0; }
    button { border: 0; background: none; padding: 0; margin: 0; font: inherit; color: inherit; text-align: center; }
    .off { color: #b4b4b4; }
    .big { display: flex; flex-direction: column; align-items: center; }
    .big .chev { height: 23px; display: grid; place-items: center; }
    .inline { display: inline-block; margin-left: 7px; vertical-align: 2px; }
    .grid { display: grid; grid-auto-rows: 24px; row-gap: 15px; align-items: center; justify-items: start; }
    .row { display: flex; align-items: center; gap: 6px; height: 24px; white-space: nowrap; }
    .g1 { width: 194px; } .g1 .items { padding-left: 14px; } .g1 .big { width: 70px; } .g1 .grid { grid-template-columns: 39px 34px 10px; margin-left: 3px; } .g1 h3 { padding-left: 4px; }
    .g2 { width: 245px; } .g2 .items { padding-left: 12px; } .g2 .big { width: 78px; } .g2 .grid { margin-left: 10px; }
    .g3 { width: 322px; } .gallery { display: flex; box-sizing: border-box; margin: 5px 16px 0 13px; flex: 1; height: 90px; border: 1px solid #cfcfcf; border-radius: 6px; }
    .gallery .big { padding-top: 13px; gap: 6px; } .gallery .org { width: 128px; } .gallery .stock { width: 128px; white-space: nowrap; }
    .gallery .drop { flex: 1; border-left: 1px solid #cfcfcf; display: grid; place-items: center; }
    .g4 { width: 330px; } .g4 .items { padding-left: 18px; } .azs { display: grid; gap: 22px; margin-top: 11px; }
    .g4 .big { width: 48px; } .g4 .s { margin-left: 14px; } .g4 .f { margin-left: 16px; } .vr { width: 1px; height: 94px; background: #cfcfcf; margin: 4px 0 0 16px; } .g4 .grid { margin-left: 16px; }
    .g5 { width: 223px; } .g5 .items { padding-left: 17px; } .g5 .big { width: 50px; } .g5 .grid { margin-left: 16px; grid-template-columns: 42px 32px 32px 10px; }
    .g6 { width: 168px; } .g6 .items { padding-left: 12px; } .g6 .big { width: 76px; }
    .g7 { width: 98px; } .g7 .big { width: 97px; }
    .g8 { width: 145px; } .g8 .items { padding-left: 19px; } .g8 .row { gap: 5px; }
    .collapse { margin: auto 4px 11px auto; }
    .az { font: 13px "Liberation Sans", sans-serif; fill: #a0a0a0; stroke: #a0a0a0; stroke-width: .4; }
    .az.wide { font-size: 15px; }
    .q { font: 30px "Liberation Sans", sans-serif; fill: #b5b5b5; }
  `];
  private row(ic: unknown, label: string, off = true) {
    return html`<button class="row ${off ? "off" : ""}">${ic}<span>${label}</span></button>`;
  }
  private tool(ic: unknown, name: string) { return html`<button aria-label=${name}>${ic}</button>`; }
  render() {
    const dim = chev("#aaa");
    const dark = chev("#222");
    return html`
      <section class="g1"><div class="items">
        <button class="big">${icons.database}<span>获取数<br>据<span class="inline">${dark}</span></span></button>
        <div class="grid">
          ${this.tool(icons.docText, "从文本")}${this.tool(icons.tableCam, "从图片")}${dim}
          ${this.tool(icons.docWeb, "自网站")}${this.tool(icons.docTime, "最近使用的源")}<i></i>
          ${this.tool(icons.tableFilter, "来自表格")}${this.tool(icons.docDb, "现有连接")}
        </div></div><h3>获取和转换数据</h3></section>
      <section class="g2"><div class="items">
        <button class="big off">${icons.refresh}<span>全部刷新</span><span class="chev">${dim}</span></button>
        <div class="grid">${this.row(icons.queries, "查询和连接", false)}${this.row(icons.props, "属性")}${this.row(icons.links, "工作簿链接")}</div>
        </div><h3>查询和连接</h3></section>
      <section class="g3"><div class="items"><div class="gallery">
        <button class="big off org">${icons.briefcase}组织</button><button class="big off stock">${icons.bank}股票 (English)</button>
        <button class="drop" aria-label="更多">${icons.more}</button></div></div><h3>数据类型</h3></section>
      <section class="g4"><div class="items">
        <div class="azs">${this.tool(icons.sortAz, "升序")}${this.tool(icons.sortZa, "降序")}</div>
        <button class="big off s">${icons.sort}排序</button><div class="vr"></div>
        <button class="big off f">${icons.filter}筛选</button>
        <div class="grid">${this.row(icons.clear, "清除")}${this.row(icons.reapply, "重新应用")}${this.row(icons.advanced, "高级")}</div>
        </div><h3>排序和筛选</h3></section>
      <section class="g5"><div class="items">
        <button class="big off">${icons.split}分列</button>
        <div class="grid">${this.tool(icons.flash, "快速填充")}<i></i>${this.tool(icons.merge, "合并计算")}<i></i>
          ${this.tool(icons.dedupe, "删除重复值")}<i></i>${this.tool(icons.model, "数据模型")}${dark}
          ${this.tool(icons.validate, "数据验证")}${dim}</div>
        </div><h3>数据工具</h3></section>
      <section class="g6"><div class="items">
        <button class="big off">${icons.whatIf}<span>模拟分析</span><span class="chev">${dim}</span></button>
        <button class="big off">${icons.forecast}<span>预测<br>工作表</span></button>
        </div><h3>预测</h3></section>
      <section class="g7"><div class="items"><button class="big">${icons.outline}<span>分级显示</span><span class="chev">${dark}</span></button></div></section>
      <section class="g8"><div class="items">${this.row(icons.analysis, "数据分析", false)}</div><h3>分析</h3></section>
      <button class="collapse" aria-label="折叠功能区">${icons.up}</button>`;
  }
}

/* ---------- application ---------- */

@customElement("app-root")
export class AppRoot extends LitElement {
  static styles = [svgBase, css`
    :host { display: flex; flex-direction: column; position: relative; height: 100vh; overflow: hidden; background: #f0f0f0; font: 20px/28px "Noto Sans", "Noto Sans CJK SC", sans-serif; color: #222; }
    button { border: 0; background: none; padding: 0; margin: 0; font: inherit; color: inherit; }
    .search { position: absolute; left: 710px; top: -20px; width: 516px; height: 22px; border: 1px solid #c4c4c4; border-radius: 6px; background: #f7f7f7; box-shadow: 0 1px 2px rgba(0,0,0,.15); }
    nav { display: flex; align-items: center; gap: 27px; height: 60px; padding: 0 0 0 24px; box-sizing: border-box; flex: none; }
    .tab { padding: 15px 0 0; height: 56px; white-space: nowrap; box-sizing: border-box; }
    .file { margin-right: 6px; }
    .pp { margin: 0 7px 0 3px; }
    .on { font-weight: 700; border-bottom: 3px solid #0e7238; border-radius: 2px; padding-top: 18px; height: 50px; }
    .ctx { color: #13723c; }
    .right { margin: 14px -4px 0 auto; display: flex; gap: 13px; }
    .note, .share { display: flex; align-items: center; height: 36px; box-sizing: border-box; border-radius: 6px; }
    .note { border: 1px solid #8a8a8a; background: #fff; padding: 0 8px 0 7px; gap: 6px; }
    .share { background: #107c41; color: #fff; border-radius: 6px 0 0 6px; padding-left: 7px; gap: 6px; font-weight: 500; }
    .share svg:last-child { margin-left: 3px; }
    .fbar { display: flex; align-items: stretch; height: 37px; margin: 12px 0 10px 9px; flex: none; }
    .field { display: flex; align-items: center; box-sizing: border-box; background: #fff; border: 1px solid #cfcfcf; border-radius: 7px; }
    .name { width: 152px; padding: 0 6px 0 7px; }
    input { border: 0; outline: 0; background: none; padding: 0; min-width: 0; flex: 1; font: 300 20px/28px "Noto Sans CJK SC", sans-serif; color: #222; }
    .dots { width: 30px; display: grid; place-items: center; }
    .tools { width: 128px; padding: 0 3px 0 8px; gap: 14px; }
    .fx { font: italic 700 25px/28px "Liberation Serif", serif; color: #333; margin: 0 -6px 0 -1px; }
    .formula { flex: 1; margin-left: 6px; border-right: 0; border-radius: 7px 0 0 7px; overflow: hidden; padding-left: 8px; }
    .formula svg { margin-right: -7px; }
    work-sheet { flex: 1; margin-right: 4px; min-height: 0; }
    .floating { position: absolute; inset: 0 5px 0 0; overflow: hidden; }
    .floating > * { position: absolute; }
    .c1 { left: 1342px; top: 316px; } .c2 { left: 1409px; top: 464px; } .c3 { left: 1487px; top: 663px; }
    .sel { left: 0; top: 0; pointer-events: none; }
    .cb { left: 1671px; width: 42px; height: 42px; box-sizing: border-box; border: 1px solid #666; background: #fff; }
    .b1 { top: 315px; } .b2 { top: 372px; } .b3 { top: 429px; }
    .brand { position: absolute; right: 4px; bottom: 4px; display: flex; white-space: nowrap; color: #000; }
    .brand b { display: block; font: 700 18px/20px "Noto Sans CJK SC", sans-serif; padding-left: 4px; }
    .brand span { display: block; font: 12px/14px "Liberation Sans", sans-serif; }
    analysis-dialog { position: absolute; left: 722px; top: 271px; }
    .marks { position: absolute; left: 0; top: 0; overflow: visible; pointer-events: none; }
  `];
  render() {
    const tab = (t: string, c = "") => html`<button class="tab ${c}">${t}</button>`;
    const handle = ([x, y]: number[]) => svg`<circle cx=${x} cy=${y} r="7" fill="#fff" stroke="#636363" stroke-width="3"/>`;
    return html`
      <div class="search"></div>
      <nav>
        ${tab("文件", "file")}${tab("开始")}${tab("插入")}${tab("页面布局")}${tab("公式")}${tab("数据", "on")}${tab("审阅")}${tab("视图")}${tab("自动执行")}${tab("帮助")}${tab("Power Pivot", "pp")}${tab("图表设计", "ctx")}${tab("格式", "ctx")}
        <div class="right"><button class="note">${icons.comment}批注</button><button class="share">${icons.share}共享${chev("#fff")}</button></div>
      </nav>
      <data-ribbon></data-ribbon>
      <div class="fbar">
        <div class="field name"><input aria-label="名称框" .value=${"图表 1"}>${chev("#333", true)}</div>
        <div class="dots">${icons.dots}</div>
        <div class="field tools">${icons.cross}${icons.check}<span class="fx">fx</span>${chev("#999", true)}</div>
        <div class="field formula"><input aria-label="编辑栏">${chev("#999", true)}</div>
      </div>
      <work-sheet></work-sheet>
      <div class="floating">
        <sheet-chart class="c1" .spec=${residual}></sheet-chart>
        <sheet-chart class="c2" .spec=${lineFit}></sheet-chart>
        <sheet-chart class="c3" .spec=${normal}></sheet-chart>
        <svg class="sel" width="1891" height="974" fill="none" aria-hidden="true">
          <rect x="1342.500" y="315.500" width="528" height="243" stroke="#636363"/>
          <path d="M1342 316.500h529M1342 559.500h67" stroke="#636363"/><path d="M1871.500 316v148" stroke="#636363"/>
          ${[[1606, 315.5], [1870.5, 315.5], [1870.5, 437.5], [1606, 558.5], [1870.5, 558.5]].map(handle)}
        </svg>
        <button class="cb b1" aria-label="图表元素">${icons.plus}</button>
        <button class="cb b2" aria-label="图表样式">${icons.brush}</button>
        <button class="cb b3" aria-label="图表筛选器">${icons.chartFilter}</button>
      </div>
      <div class="brand">${icons.flower}<div><b>品质协会</b><span>www.PinZhi.org</span></div></div>
      <analysis-dialog></analysis-dialog>
      <svg class="marks" width="1891" height="974" fill="none" stroke="#ed1c24" aria-hidden="true">
        <rect x="1598" y="47" width="123" height="67" stroke-width="2"/>
        <rect x="729" y="269" width="106" height="38" stroke-width="2"/>
        <path d="M1624 116L1003 565" stroke-width="5"/>
        <path d="M989.500 576l10.500-18.500 3.500 6.500 6.500 7.500z" fill="#ed1c24" stroke-width="1"/>
      </svg>`;
  }
}
